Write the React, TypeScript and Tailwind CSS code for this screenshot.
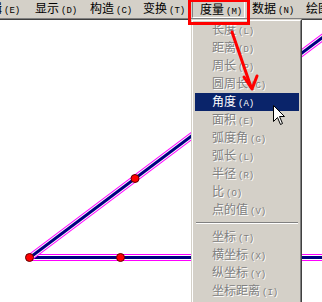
import React from 'react';

type MenuItem = { label: string; key: string; active?: boolean } | 'sep';

const barItems = [
  { label: '编辑', key: 'E', w: 'w-[57px]' },
  { label: '显示', key: 'D', w: 'w-[55px]' },
  { label: '构造', key: 'C', w: 'w-[53px]' },
  { label: '变换', key: 'T', w: 'w-[56px]' },
  { label: '度量', key: 'M', w: 'w-[53px]', pressed: true },
  { label: '数据', key: 'N', w: 'w-[54px]' },
  { label: '绘图', key: 'G', w: 'w-[60px]' },
];

const menuItems: MenuItem[] = [
  { label: '长度', key: 'L' },
  { label: '距离', key: 'D' },
  { label: '周长', key: 'P' },
  { label: '圆周长', key: 'C' },
  { label: '角度', key: 'A', active: true },
  { label: '面积', key: 'E' },
  { label: '弧度角', key: 'G' },
  { label: '弧长', key: 'L' },
  { label: '半径', key: 'R' },
  { label: '比', key: 'O' },
  { label: '点的值', key: 'V' },
  'sep',
  { label: '坐标', key: 'T' },
  { label: '横坐标', key: 'X' },
  { label: '纵坐标', key: 'Y' },
  { label: '坐标距离', key: 'I' },
];

function Label({ label, k }: { label: string; k: string }) {
  return (
    <span className="whitespace-nowrap">
      {label}
      <span className="ml-[2px] font-['Liberation_Mono',monospace] text-[9px]">({k})</span>
    </span>
  );
}

export default function App() {
  return (
    <div className="relative w-[322px] h-[302px] overflow-hidden bg-white font-['Noto_Sans_CJK_SC',sans-serif] text-[12px] leading-none text-black flex flex-col">
      {/* Menu bar */}
      <div className="h-[18px] bg-[#d4d0c8] flex items-stretch ml-[-29px] shrink-0">
        {barItems.map((b) => (
          <div key={b.label} className={`${b.w} shrink-0 flex`}>
            {b.pressed ? (
              <div className="w-[56px] h-[18px] border border-t-[#808080] border-l-[#808080] border-b-white border-r-white pl-[7px] pt-[1px] flex items-center">
                <Label label={b.label} k={b.key} />
              </div>
            ) : (
              <div className="pl-[7px] flex items-center">
                <Label label={b.label} k={b.key} />
              </div>
            )}
          </div>
        ))}
      </div>
      <div className="h-[1px] bg-[#808080] shrink-0" />
      <div className="h-[1px] bg-[#404040] shrink-0" />

      {/* Drawing canvas */}
      <div className="relative flex-1">
        <svg className="absolute inset-0" width="322" height="282" viewBox="0 20 322 282">
          <g fill="none" strokeLinecap="butt">
            <line x1="30" y1="257.5" x2="330" y2="257.5" stroke="#ff00ff" strokeWidth="7" />
            <line x1="30" y1="257.5" x2="330" y2="257.5" stroke="#ffffff" strokeWidth="5" />
            <line x1="30" y1="257.5" x2="330" y2="257.5" stroke="#000080" strokeWidth="3" />
            <line x1="30" y1="257.5" x2="330" y2="31.9" stroke="#ff00ff" strokeWidth="7" />
            <line x1="30" y1="257.5" x2="330" y2="31.9" stroke="#ffffff" strokeWidth="5" />
            <line x1="30" y1="257.5" x2="330" y2="31.9" stroke="#000080" strokeWidth="3" />
          </g>
          <circle cx="29.5" cy="257.5" r="4" fill="#ff0000" stroke="#600000" strokeWidth="1" />
          <circle cx="120.5" cy="257.5" r="4" fill="#ff0000" stroke="#600000" strokeWidth="1" />
          <circle cx="135" cy="178.5" r="4" fill="#ff0000" stroke="#600000" strokeWidth="1" />
        </svg>
      </div>

      {/* Dropdown menu */}
      <div className="absolute left-[191px] top-[19px] w-[111px] h-[300px] border border-t-[#d4d0c8] border-l-[#d4d0c8] border-r-[#404040] border-b-[#404040] bg-[#d4d0c8]">
        <div className="h-full border border-t-white border-l-white border-r-[#808080] border-b-[#808080] pl-[2px] pr-[1px]">
          {menuItems.map((it, i) =>
            it === 'sep' ? (
              <div key={i} className="h-[9px] pt-[3px] px-[1px]">
                <div className="h-[1px] bg-[#808080]" />
                <div className="h-[1px] bg-white" />
              </div>
            ) : (
              <div
                key={i}
                className={`h-[18px] pl-[17px] flex items-center ${
                  it.active
                    ? 'bg-[#0a246a] text-white'
                    : 'text-[#808080] [text-shadow:1px_1px_0_#ffffff]'
                }`}
              >
                <Label label={it.label} k={it.key} />
              </div>
            )
          )}
        </div>
      </div>

      {/* Red highlight box around menu title */}
      <div className="absolute left-[188px] top-[-1px] w-[62px] h-[26px] border-[3px] border-[#ff0000]" />

      {/* Red arrow */}
      <svg className="absolute left-0 top-0 pointer-events-none" width="322" height="302">
        <g stroke="#ff0000" strokeWidth="3" fill="none" strokeLinecap="round" strokeLinejoin="round">
          <line x1="232" y1="32" x2="251" y2="87" />
          <polyline points="244,77 252,89 257,76" />
        </g>
      </svg>

      {/* Mouse cursor */}
      <svg className="absolute left-[273px] top-[105px]" width="13" height="20" viewBox="0 0 13 20">
        <path
          d="M0.5 0.5 L0.5 16.5 L4.5 12.5 L7.5 19.5 L9.5 18.5 L6.5 11.5 L11.5 11.5 Z"
          fill="#ffffff"
          stroke="#000000"
          strokeWidth="1"
          strokeLinejoin="miter"
        />
      </svg>
    </div>
  );
}
